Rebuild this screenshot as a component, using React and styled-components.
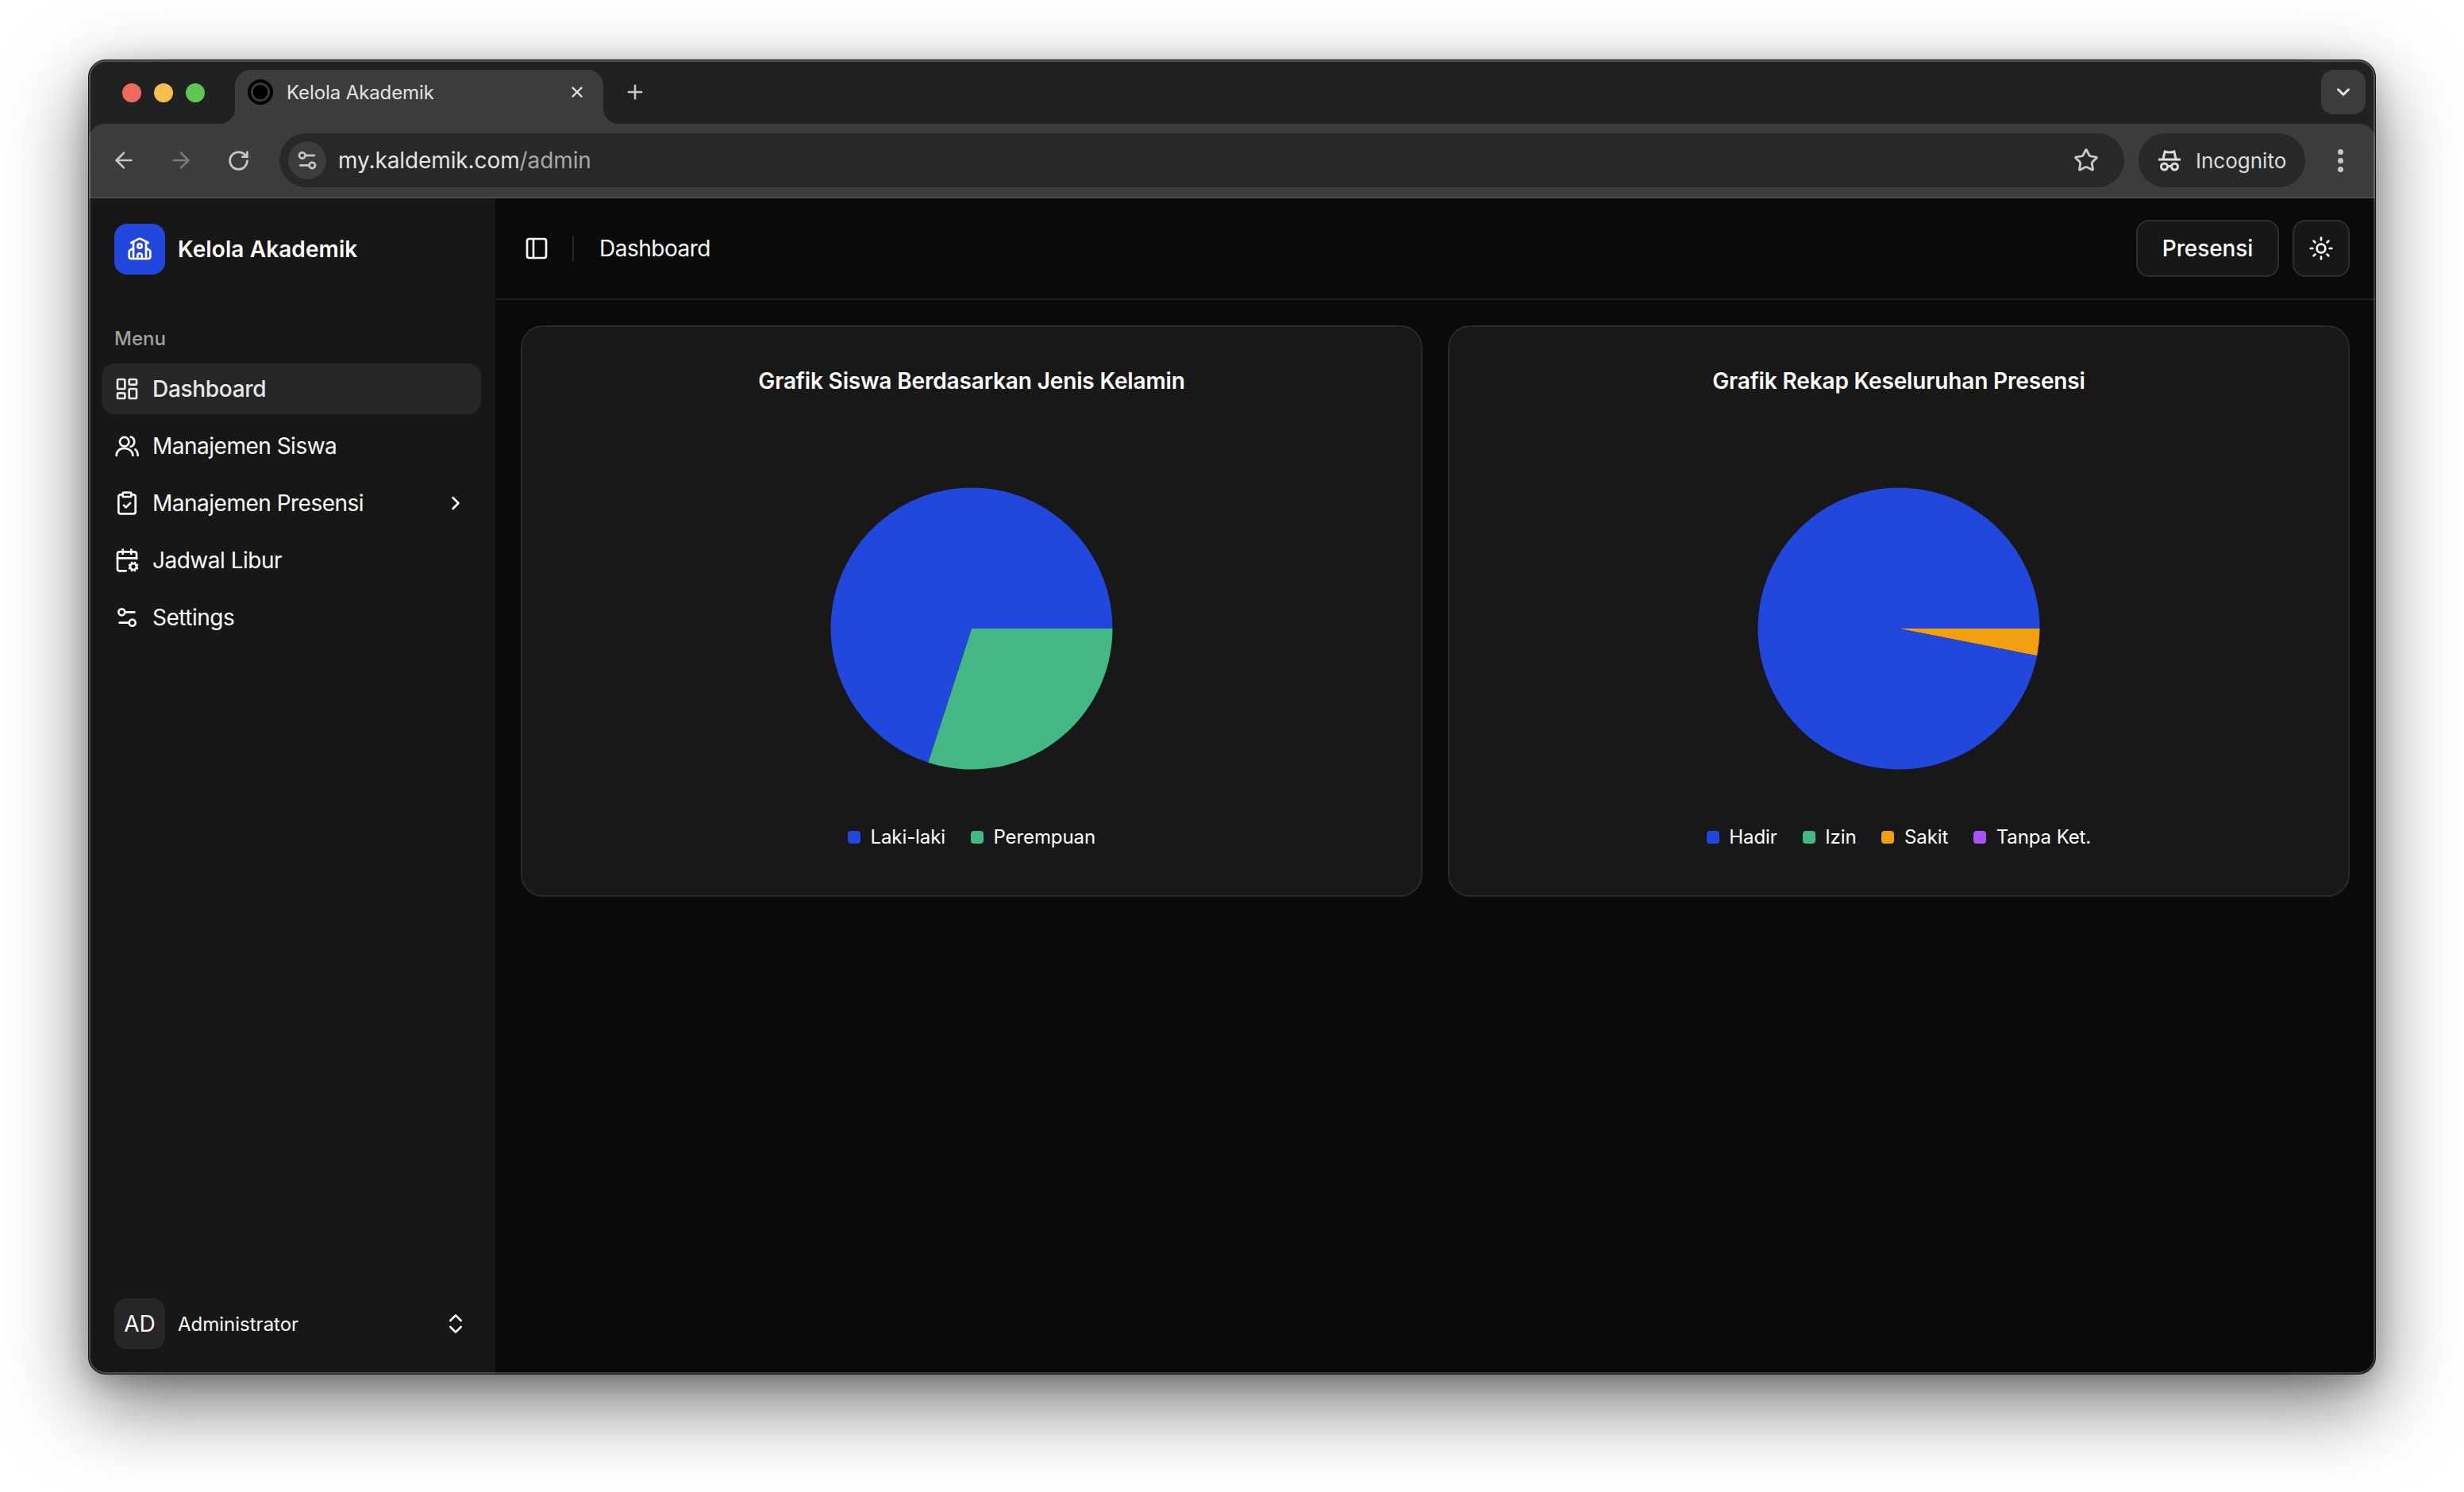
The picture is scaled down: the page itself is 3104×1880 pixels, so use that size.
import React from 'react';
import styled, { createGlobalStyle } from 'styled-components';
import {
  ArrowLeft,
  ArrowRight,
  CalendarCog,
  ChevronDown,
  ChevronRight,
  ChevronsUpDown,
  ClipboardCheck,
  LayoutDashboard,
  PanelLeft,
  Plus,
  RotateCw,
  School,
  Settings2,
  Star,
  Sun,
  X,
} from 'lucide-react';

const BLUE = '#2247dd';
const GREEN = '#43b884';
const ORANGE = '#f29e0f';
const PURPLE = '#a855f7';

const PeopleIcon = ({ size }) => (
  <svg width={size} height={size} viewBox="0 0 24 24" fill="none" stroke="currentColor" strokeWidth="2" strokeLinecap="round">
    <circle cx="9.5" cy="8" r="4.3" />
    <path d="M2 21c0-4 3-6.8 7.5-6.8S17.5 17 17.5 21" />
    <path d="M15.5 3.4a4.8 4.8 0 0 1 0 9.2" />
    <path d="M19.8 15.2c1.5 1.2 2.4 3.2 2.4 5.8" />
  </svg>
);

const MENU = [
  { label: 'Dashboard', icon: LayoutDashboard, active: true },
  { label: 'Manajemen Siswa', icon: PeopleIcon },
  { label: 'Manajemen Presensi', icon: ClipboardCheck, more: true },
  { label: 'Jadwal Libur', icon: CalendarCog },
  { label: 'Settings', icon: Settings2 },
];

const CHARTS = [
  {
    title: 'Grafik Siswa Berdasarkan Jenis Kelamin',
    slices: [
      { color: GREEN, value: 30 },
      { color: BLUE, value: 70 },
    ],
    legend: [
      { label: 'Laki-laki', color: BLUE },
      { label: 'Perempuan', color: GREEN },
    ],
  },
  {
    title: 'Grafik Rekap Keseluruhan Presensi',
    slices: [
      { color: ORANGE, value: 3.1 },
      { color: BLUE, value: 96.9 },
    ],
    legend: [
      { label: 'Hadir', color: BLUE },
      { label: 'Izin', color: GREEN },
      { label: 'Sakit', color: ORANGE },
      { label: 'Tanpa Ket.', color: PURPLE },
    ],
  },
];

const IncognitoIcon = () => (
  <svg width="30" height="28" viewBox="0 0 30 28" fill="none" stroke="currentColor" strokeWidth="3">
    <path d="M7 12l2.2-9c3.8 1.4 7.8 1.4 11.6 0L23 12" />
    <path d="M1 13h28" />
    <circle cx="8.5" cy="22" r="4" />
    <circle cx="21.5" cy="22" r="4" />
    <path d="M12.5 21.5h5" />
  </svg>
);

const PieChart = ({ slices }) => {
  const r = 177.5;
  let angle = 0;
  return (
    <svg width="356" height="356" viewBox="-178 -178 356 356">
      {slices.map((s) => {
        const start = angle;
        angle += (s.value / 100) * Math.PI * 2;
        const large = angle - start > Math.PI ? 1 : 0;
        const d = `M0 0L${r * Math.cos(start)} ${r * Math.sin(start)}A${r} ${r} 0 ${large} 1 ${r * Math.cos(angle)} ${r * Math.sin(angle)}Z`;
        return <path key={s.color} d={d} fill={s.color} />;
      })}
    </svg>
  );
};

const App = () => (
  <Page>
    <GlobalStyle />
    <Window>
      <TabStrip>
        <Lights>
          <Light color="#ee6a5f" />
          <Light color="#f5bf4f" />
          <Light color="#61c554" />
        </Lights>
        <Tab>
          <Favicon />
          <TabTitle>Kelola Akademik</TabTitle>
          <X size={22} strokeWidth={2.6} />
        </Tab>
        <NewTab>
          <Plus size={28} strokeWidth={2.2} />
        </NewTab>
        <TabSearch>
          <ChevronDown size={26} strokeWidth={2.8} />
        </TabSearch>
      </TabStrip>
      <Toolbar>
        <NavButton>
          <ArrowLeft size={32} strokeWidth={2} />
        </NavButton>
        <NavButton dim>
          <ArrowRight size={32} strokeWidth={2} />
        </NavButton>
        <NavButton>
          <RotateCw size={29} strokeWidth={2.2} />
        </NavButton>
        <Omnibox>
          <SiteInfo>
            <Settings2 size={30} strokeWidth={2.2} />
          </SiteInfo>
          <Url>
            my.kaldemik.com<UrlPath>/admin</UrlPath>
          </Url>
          <StarWrap>
            <Star size={32} strokeWidth={2.2} />
          </StarWrap>
        </Omnibox>
        <IncognitoPill>
          <IncognitoIcon />
          Incognito
        </IncognitoPill>
        <Kebab>
          <Dot />
          <Dot />
          <Dot />
        </Kebab>
      </Toolbar>
      <AppShell>
        <Sidebar>
          <Brand>
            <BrandLogo>
              <School size={32} strokeWidth={2} />
            </BrandLogo>
            <BrandName>Kelola Akademik</BrandName>
          </Brand>
          <MenuLabel>Menu</MenuLabel>
          <MenuList>
            {MENU.map(({ label, icon: Icon, active, more }) => (
              <MenuItem key={label} active={active}>
                <Icon size={32} strokeWidth={2} />
                <MenuText>{label}</MenuText>
                {more && <ChevronRight size={28} strokeWidth={2.2} />}
              </MenuItem>
            ))}
          </MenuList>
          <UserRow>
            <Avatar>AD</Avatar>
            <UserName>Administrator</UserName>
            <ChevronsUpDown size={32} strokeWidth={2} />
          </UserRow>
        </Sidebar>
        <Main>
          <Header>
            <PanelLeft size={32} strokeWidth={2} />
            <HeaderDivider />
            <Crumb>Dashboard</Crumb>
            <HeaderActions>
              <OutlineButton>Presensi</OutlineButton>
              <IconButton>
                <Sun size={32} strokeWidth={2} />
              </IconButton>
            </HeaderActions>
          </Header>
          <Charts>
            {CHARTS.map((chart) => (
              <Card key={chart.title}>
                <CardTitle>{chart.title}</CardTitle>
                <PieWrap>
                  <PieChart slices={chart.slices} />
                </PieWrap>
                <Legend>
                  {chart.legend.map((item) => (
                    <LegendItem key={item.label}>
                      <Swatch color={item.color} />
                      {item.label}
                    </LegendItem>
                  ))}
                </Legend>
              </Card>
            ))}
          </Charts>
        </Main>
      </AppShell>
    </Window>
  </Page>
);

export default App;

const GlobalStyle = createGlobalStyle`
  html, body {
    margin: 0;
    background: #fff;
  }
  * {
    box-sizing: border-box;
  }
`;

const Page = styled.div`
  width: 3104px;
  height: 1880px;
  padding: 75px 0 0 111px;
  font-family: Inter, 'Liberation Sans', sans-serif;
  overflow: hidden;
`;

const Window = styled.div`
  position: relative;
  width: 2882px;
  height: 1657px;
  border: 1px solid #141414;
  border-radius: 22px;
  background: #202221;
  display: flex;
  flex-direction: column;
  overflow: hidden;
  box-shadow: 0 36px 100px rgba(0, 0, 0, 0.55), 0 8px 30px rgba(0, 0, 0, 0.2);
  &::after {
    content: '';
    position: absolute;
    inset: 0;
    border-radius: 21px;
    box-shadow: inset 0 0 0 2px rgba(255, 255, 255, 0.22);
    pointer-events: none;
  }
`;

const TabStrip = styled.div`
  height: 80px;
  flex: none;
  display: flex;
  align-items: flex-end;
  padding-left: 42px;
  padding-right: 12px;
`;

const Lights = styled.div`
  display: flex;
  gap: 16px;
  align-self: flex-start;
  padding-top: 29px;
  width: 142px;
`;

const Light = styled.span`
  width: 24px;
  height: 24px;
  border-radius: 50%;
  background: ${(p) => p.color};
`;

const Tab = styled.div`
  position: relative;
  width: 464px;
  height: 68px;
  background: #3c3c3c;
  border-radius: 20px 20px 0 0;
  display: flex;
  align-items: center;
  padding: 0 22px 12px 16px;
  color: #e3e3e3;
  &::before,
  &::after {
    content: '';
    position: absolute;
    bottom: 0;
    width: 20px;
    height: 20px;
  }
  &::before {
    left: -20px;
    background: radial-gradient(circle at 0 0, transparent 20px, #3c3c3c 20.5px);
  }
  &::after {
    right: -20px;
    background: radial-gradient(circle at 100% 0, transparent 20px, #3c3c3c 20.5px);
  }
`;

const Favicon = styled.span`
  width: 32px;
  height: 32px;
  flex: none;
  border-radius: 50%;
  border: 4px solid #000;
  background: radial-gradient(circle, #000 9px, #3c3c3c 9.5px);
`;

const TabTitle = styled.span`
  flex: 1;
  margin-left: 17px;
  font-size: 24px;
  letter-spacing: -0.1px;
  color: #e3e3e3;
`;

const NewTab = styled.div`
  width: 28px;
  height: 28px;
  margin: 0 0 26px 26px;
  align-self: flex-end;
  color: #c7c7c7;
`;

const TabSearch = styled.div`
  width: 56px;
  height: 56px;
  margin-left: auto;
  align-self: flex-end;
  margin-bottom: 12px;
  border-radius: 16px;
  background: #3c3c3c;
  color: #e3e3e3;
  display: flex;
  align-items: center;
  justify-content: center;
`;

const Toolbar = styled.div`
  height: 94px;
  flex: none;
  display: flex;
  align-items: flex-start;
  padding: 12px 0 0 8px;
  background: #3c3c3c;
  border-radius: 20px 20px 0 0;
  border-bottom: 2px solid #4a4a4a;
`;

const NavButton = styled.div`
  width: 72px;
  height: 68px;
  flex: none;
  display: flex;
  align-items: center;
  justify-content: center;
  color: ${(p) => (p.dim ? '#7b7b7b' : '#c7c7c7')};
`;

const Omnibox = styled.div`
  width: 2324px;
  height: 68px;
  margin-left: 16px;
  padding: 0 32px 0 11px;
  border-radius: 34px;
  background: #282828;
  display: flex;
  align-items: center;
`;

const SiteInfo = styled.div`
  width: 48px;
  height: 48px;
  flex: none;
  border-radius: 50%;
  background: #3c3c3c;
  color: #c7c7c7;
  display: flex;
  align-items: center;
  justify-content: center;
`;

const Url = styled.div`
  margin-left: 15px;
  font-size: 28px;
  letter-spacing: -0.1px;
  color: #e3e3e3;
`;

const UrlPath = styled.span`
  color: #a8a8a8;
`;

const StarWrap = styled.div`
  margin-left: auto;
  height: 32px;
  color: #c7c7c7;
`;

const IncognitoPill = styled.div`
  width: 210px;
  height: 68px;
  margin-left: 18px;
  padding-left: 24px;
  border-radius: 34px;
  background: #282828;
  color: #dcdcdc;
  font-size: 26px;
  display: flex;
  align-items: center;
  gap: 18px;
`;

const Kebab = styled.div`
  width: 72px;
  height: 68px;
  margin-left: 8px;
  display: flex;
  flex-direction: column;
  align-items: center;
  justify-content: center;
  gap: 4px;
`;

const Dot = styled.span`
  width: 7px;
  height: 7px;
  border-radius: 50%;
  background: #c7c7c7;
`;

const AppShell = styled.div`
  flex: 1;
  min-height: 0;
  display: flex;
  background: #0a0a0a;
`;

const Sidebar = styled.aside`
  width: 512px;
  flex: none;
  background: #171717;
  color: #fafafa;
  display: flex;
  flex-direction: column;
  padding: 32px 16px 31px;
`;

const Brand = styled.div`
  display: flex;
  align-items: center;
  gap: 16px;
  padding-left: 16px;
`;

const BrandLogo = styled.div`
  width: 64px;
  height: 64px;
  border-radius: 16px;
  background: ${BLUE};
  color: #fff;
  display: flex;
  align-items: center;
  justify-content: center;
`;

const BrandName = styled.div`
  font-size: 28px;
  font-weight: 600;
  letter-spacing: 0.1px;
  color: #fff;
`;

const MenuLabel = styled.div`
  margin-top: 64px;
  padding-left: 16px;
  height: 32px;
  line-height: 34px;
  font-size: 24px;
  font-weight: 500;
  color: #a1a1a1;
`;

const MenuList = styled.nav`
  margin: 16px 2px 0 0;
  display: flex;
  flex-direction: column;
  gap: 8px;
`;

const MenuItem = styled.div`
  height: 64px;
  display: flex;
  align-items: center;
  gap: 16px;
  padding: 0 18px 0 16px;
  border-radius: 16px;
  font-size: 28px;
  font-weight: ${(p) => (p.active ? 500 : 400)};
  letter-spacing: ${(p) => (p.active ? '-0.3px' : '-0.5px')};
  color: ${(p) => (p.active ? '#e8e8e8' : '#fafafa')};
  background: ${(p) => (p.active ? '#262626' : 'transparent')};
`;

const MenuText = styled.span`
  flex: 1;
`;

const UserRow = styled.div`
  margin-top: auto;
  display: flex;
  align-items: center;
  padding: 0 18px 0 16px;
`;

const Avatar = styled.div`
  width: 64px;
  height: 64px;
  border-radius: 16px;
  background: #262626;
  font-size: 28px;
  display: flex;
  align-items: center;
  justify-content: center;
`;

const UserName = styled.div`
  flex: 1;
  margin-left: 16px;
  font-size: 24px;
`;

const Main = styled.main`
  flex: 1;
  min-width: 0;
  display: flex;
  flex-direction: column;
  color: #fafafa;
`;

const Header = styled.header`
  height: 128px;
  flex: none;
  display: flex;
  align-items: center;
  padding: 0 32px 0 36px;
  border-bottom: 2px solid #1f1f1f;
`;

const HeaderDivider = styled.span`
  width: 2px;
  height: 32px;
  margin: 0 32px 0 29px;
  background: #262626;
`;

const Crumb = styled.span`
  font-size: 28px;
  letter-spacing: -0.5px;
`;

const HeaderActions = styled.div`
  margin-left: auto;
  display: flex;
  gap: 17px;
`;

const OutlineButton = styled.div`
  width: 180px;
  height: 72px;
  border: 2px solid #2e2e2e;
  border-radius: 16px;
  background: #171717;
  font-size: 28px;
  font-weight: 500;
  letter-spacing: -0.1px;
  color: #fff;
  display: flex;
  align-items: center;
  justify-content: center;
`;

const IconButton = styled(OutlineButton)`
  width: 72px;
`;

const Charts = styled.section`
  display: grid;
  grid-template-columns: 1fr 1fr;
  gap: 32px;
  padding: 32px;
`;

const Card = styled.div`
  height: 720px;
  border: 2px solid #2a2a2a;
  border-radius: 28px;
  background: #181818;
  display: flex;
  flex-direction: column;
  align-items: center;
  padding-top: 51px;
`;

const CardTitle = styled.div`
  height: 34px;
  line-height: 34px;
  font-size: 28px;
  font-weight: 600;
  letter-spacing: -0.15px;
  color: #fff;
`;

const PieWrap = styled.div`
  margin-top: 117px;
  height: 356px;
`;

const Legend = styled.div`
  margin-top: 69px;
  display: flex;
  gap: 32px;
`;

const LegendItem = styled.div`
  display: flex;
  align-items: center;
  gap: 12.5px;
  font-size: 24px;
  letter-spacing: -0.1px;
  line-height: 32px;
  color: #fff;
`;

const Swatch = styled.span`
  width: 16px;
  height: 16px;
  border-radius: 4px;
  background: ${(p) => p.color};
`;
